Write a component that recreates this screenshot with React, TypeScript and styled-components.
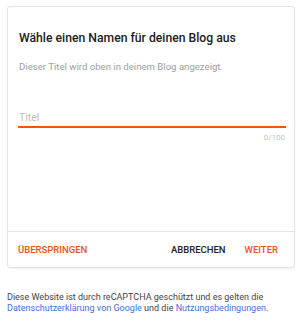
import React from 'react';
import styled, { createGlobalStyle } from 'styled-components';

const GlobalStyle = createGlobalStyle`
  body {
    margin: 0;
    background: #ffffff;
    font-family: Roboto, "Liberation Sans", Arial, sans-serif;
  }
`;

const Page = styled.div`
  padding: 6px 5px 0 7px;
`;

const Card = styled.div`
  border: 1px solid #e2e5e8;
  border-radius: 3px;
  box-shadow: 0 1px 2px rgba(0, 0, 0, 0.06);
  background: #ffffff;
`;

const Body = styled.div`
  padding: 23px 9px 0 10px;
  height: 224px;
  box-sizing: border-box;
`;

const Title = styled.h1`
  margin: 0 0 0 1px;
  font-size: 12.2px;
  font-weight: 500;
  color: #212121;
  line-height: 16px;
`;

const Subtitle = styled.p`
  margin: 15px 0 0 1px;
  font-size: 9.6px;
  color: #9e9e9e;
  line-height: 12px;
`;

const Field = styled.div`
  margin-top: 38px;
`;

const Input = styled.input`
  display: block;
  width: 100%;
  box-sizing: content-box;
  height: 13px;
  border: none;
  border-bottom: 2px solid #f4511e;
  padding: 0 0 2px 1px;
  margin: 0;
  font-family: inherit;
  font-size: 10.5px;
  line-height: 13px;
  color: #212121;
  outline: none;
  background: transparent;

  &::placeholder {
    color: #bdbdbd;
  }
`;

const Counter = styled.div`
  text-align: right;
  font-size: 8px;
  line-height: 10px;
  color: #c4c4c4;
  margin-top: 5px;
`;

const Footer = styled.div`
  display: flex;
  align-items: center;
  border-top: 1px solid #e2e5e8;
  height: 35px;
  padding: 0 16px 0 10px;
`;

const Spacer = styled.div`
  flex: 1;
`;

const Action = styled.button<{ $tone: 'accent' | 'plain' }>`
  border: none;
  background: none;
  padding: 0;
  font-family: inherit;
  font-size: 9.5px;
  font-weight: 500;
  text-transform: uppercase;
  color: ${(p) => (p.$tone === 'accent' ? '#f4511e' : '#212121')};
  cursor: pointer;
  margin-left: 19px;

  &:first-child {
    margin-left: 0;
  }
`;

const Notice = styled.p`
  margin: 24px 0 0 7px;
  font-size: 9px;
  line-height: 10.5px;
  color: #444444;
`;

const Link = styled.a`
  color: #4a6ee0;
  text-decoration: none;
`;

export default function App() {
  return (
    <>
      <GlobalStyle />
      <Page>
        <Card>
          <Body>
            <Title>Wähle einen Namen für deinen Blog aus</Title>
            <Subtitle>Dieser Titel wird oben in deinem Blog angezeigt.</Subtitle>
            <Field>
              <Input placeholder="Titel" />
              <Counter>0/100</Counter>
            </Field>
          </Body>
          <Footer>
            <Action $tone="accent">Überspringen</Action>
            <Spacer />
            <Action $tone="plain">Abbrechen</Action>
            <Action $tone="accent">Weiter</Action>
          </Footer>
        </Card>
      </Page>
      <Notice>
        Diese Website ist durch reCAPTCHA geschützt und es gelten die{' '}
        <Link href="#">Datenschutzerklärung von Google</Link> und die{' '}
        <Link href="#">Nutzungsbedingungen</Link>.
      </Notice>
    </>
  );
}
